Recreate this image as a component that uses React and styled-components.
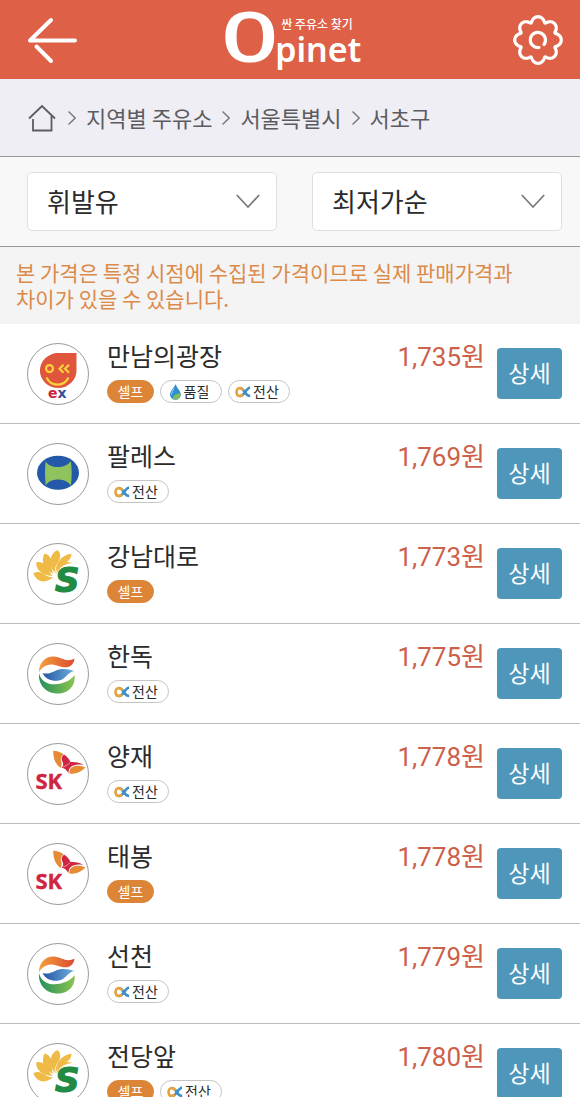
import React, { useState } from 'react';
import styled, { createGlobalStyle } from 'styled-components';

const GlobalStyle = createGlobalStyle`
  * { box-sizing: border-box; }
  html { scrollbar-width: none; }
  body {
    margin: 0;
    background: #fff;
    color: #2b2b2b;
    font-family: "Noto Sans CJK KR", sans-serif;
  }
  button, select { font-family: inherit; }
`;

const Header = styled.header`
  display: flex;
  align-items: center;
  justify-content: space-between;
  height: 79px;
  padding: 0 17px 0 27px;
  background: #de6046;
`;
const IconButton = styled.button`
  display: flex;
  padding: 0;
  border: 0;
  background: none;
  color: #fff;
  cursor: pointer;
`;
const Brand = styled.a`
  display: flex;
  align-self: flex-start;
  align-items: flex-start;
  margin-right: 4px;
  color: #fff;
  text-decoration: none;
`;
const BrandInitial = styled.span`
  font: 400 70px/74px "Liberation Serif", serif;
  -webkit-text-stroke: 4px #fff;
`;
const BrandRest = styled.span`
  display: flex;
  flex-direction: column;
  padding-top: 16px;
`;
const BrandTagline = styled.span`
  padding-left: 6px;
  font-size: 12px;
  font-weight: 500;
  line-height: 16px;
`;
const BrandName = styled.span`
  font: 600 34px/34px "Noto Sans", sans-serif;
`;

const Breadcrumb = styled.nav`
  display: flex;
  align-items: center;
  gap: 10px;
  height: 78px;
  padding: 0 28px;
  background: #efeef4;
  border-bottom: 1px solid #98989b;
`;
const Crumb = styled.a`
  display: flex;
  padding-bottom: 2px;
  color: #5c5c60;
  font-size: 22px;
  line-height: 32px;
  text-decoration: none;
  white-space: nowrap;
`;

const FilterBar = styled.div`
  display: grid;
  grid-template-columns: 1fr 1fr;
  gap: 35px;
  padding: 15px 18px 15px 27px;
  background: #f8f8f8;
  border-bottom: 1px solid #98989b;
`;
const SelectBox = styled.div`
  position: relative;
  svg {
    position: absolute;
    right: 17px;
    top: 22px;
    pointer-events: none;
  }
`;
const Select = styled.select`
  display: block;
  width: 100%;
  height: 59px;
  padding: 0 50px 2px 19px;
  border: 1px solid #dfdfdf;
  border-radius: 5px;
  background: #fff;
  color: #2b2b2b;
  font-size: 26px;
  appearance: none;
`;

const Notice = styled.p`
  margin: 0;
  padding: 12px 16px 13px;
  background: #f4f4f4;
  color: #dc8a4a;
  font-size: 21px;
  line-height: 26px;
  word-break: keep-all;
`;

const StationList = styled.ul`
  margin: 0;
  padding: 0;
  list-style: none;
`;
const StationRow = styled.li`
  display: flex;
  align-items: center;
  height: 100px;
  padding: 0 18px 0 27px;
  border-bottom: 1px solid #bdbdbd;
`;
const BrandMark = styled.svg`
  flex: none;
  width: 62px;
  height: 62px;
  border: 1px solid #9a9a9a;
  border-radius: 50%;
`;
const StationInfo = styled.div`
  flex: 1;
  align-self: flex-start;
  padding: 14px 0 0 18px;
`;
const StationName = styled.h2`
  margin: 0;
  font-size: 25px;
  font-weight: 400;
  line-height: 34px;
`;
const Badges = styled.div`
  display: flex;
  gap: 6px;
  margin-top: 8px;
`;
const Badge = styled.span`
  display: flex;
  align-items: center;
  justify-content: center;
  gap: 2px;
  width: ${props => props.$self ? "47px" : "62px"};
  height: 23px;
  padding-right: ${props => props.$self ? "0" : "4px"};
  border: 1px solid ${props => props.$self ? "#dc8537" : "#c4c4c4"};
  border-radius: 12px;
  background: ${props => props.$self ? "#dc8537" : "#fff"};
  color: ${props => props.$self ? "#fff" : "#2b2b2b"};
  font-size: 14px;
  line-height: 20px;
`;
const BadgeText = styled.span`
  padding-bottom: 2px;
`;
const Price = styled.span`
  align-self: flex-start;
  padding-top: 16px;
  color: #cd6049;
  font-family: Roboto, "Noto Sans CJK KR", sans-serif;
  font-size: 26px;
  line-height: 34px;
`;
const DetailButton = styled.button`
  width: 65px;
  height: 51px;
  margin-left: 12px;
  padding: 0 0 4px;
  border: 0;
  border-radius: 4px;
  background: #4f97ba;
  color: #fff;
  font-size: 23px;
  cursor: pointer;
`;

// eight rounded teeth around the centre
const gearPath = Array.from({ length: 160 }, (_, i) => {
  const a = (i / 160) * Math.PI * 2;
  const r = 20.8 + 2.5 * Math.cos(8 * a);
  const t = a + 0.07 * Math.sin(8 * a);
  return `${i ? "L" : "M"}${(25 + r * Math.cos(t)).toFixed(2)} ${(25 + r * Math.sin(t)).toFixed(2)}`;
}).join("") + "Z";

const BackIcon = () => (
  <svg width="50" height="50" viewBox="0 0 50 50" fill="none" stroke="currentColor" strokeWidth="4" strokeLinecap="round" strokeLinejoin="round">
    <path d="M24 5 3 25.500H48M9.500 31.500 24 46" />
  </svg>
);

const GearIcon = () => (
  <svg width="50" height="50" viewBox="0 0 50 50" fill="none" stroke="currentColor" strokeWidth="3.200" strokeLinecap="round" strokeLinejoin="round">
    <path d={gearPath} />
    <path d="M26 32.500A7.600 7.600 0 1 1 31 29.500" />
  </svg>
);

const HomeIcon = () => (
  <svg width="30" height="32" viewBox="0 0 30 32" fill="none" stroke="currentColor" strokeWidth="1.800">
    <path d="M1 17.500 14 5 27 17.500M5 18V29.500H23.500V14" />
  </svg>
);

const CrumbArrow = () => (
  <svg width="8" height="14" viewBox="0 0 8 14" fill="none" stroke="#77777b" strokeWidth="1.400">
    <path d="M.5.5 7.200 7 .5 13.500" />
  </svg>
);

const SelectArrow = () => (
  <svg width="24" height="15" viewBox="0 0 24 15" fill="none" stroke="#7c7c7c" strokeWidth="1.800">
    <path d="M.8 1 12 13 23.200 1" />
  </svg>
);

const DropIcon = () => (
  <svg width="13" height="16" viewBox="0 0 13 16">
    <path d="M6.500.3C5 4 1 7 1 10.500a5.400 5.200 0 0 0 10.800 0C11.800 7 8 4 6.500.3Z" fill="#2f8fcf" />
    <path d="M4 15c-.5-3.500 3-6 7.600-5.500.7 3-1.600 6.300-5.200 6.200Z" fill="#7dbb5c" />
    <path d="M5 4.500C3.500 7 2.400 8.500 2.600 10.500" stroke="#9fd4f2" strokeWidth="1" fill="none" />
  </svg>
);

const AlphaIcon = () => (
  <svg width="16" height="12" viewBox="0 0 16 12" fill="none" strokeWidth="2.600">
    <path d="M15 1.500C12.500 2 11 5 9 7.500 7.500 9.500 6 10.200 4.600 10" stroke="#3d8fc8" />
    <path d="M4.800 2C7.500 2 8.500 4 10 6.500 11.500 9 13 10 15.200 10" stroke="#3d8fc8" />
    <path d="M8.500 4.500C7.500 3 6.500 2 4.800 2 3 2 1.500 3.500 1.500 6 1.500 8.500 3 10 4.800 10 6 10 7 9.500 8 8.500" stroke="#e6a23c" />
  </svg>
);

const ExMark = () => (
  <>
    <defs>
      <linearGradient id="exText">
        <stop offset=".55" stopColor="#c8233f" />
        <stop offset=".7" stopColor="#2b4fa2" />
      </linearGradient>
    </defs>
    <path d="M31 10H49.500V27.500A18.300 17.500 0 1 1 31 10Z" fill="#e0563c" />
    <g fill="none" stroke="#fbd23c" strokeWidth="2.200">
      <circle cx="22.500" cy="25.600" r="3.500" />
      <path d="M36.500 21.800 32.500 25.800 36.500 29.800M42 21.800 38 25.800 42 29.800" />
      <path d="M19.500 34.500C24 44 37 44 41.500 34.500" />
    </g>
    <text x="21" y="54.500" fontFamily="DejaVu Sans" fontWeight="700" fontSize="14" fill="url(#exText)">ex</text>
  </>
);

const HyundaiMark = () => (
  <>
    <ellipse cx="31" cy="29.800" rx="21" ry="17" fill="#2459a9" />
    <path d="M18.700 18.300C22 26 39 26 43.800 18.300 45 26 45 34 43.800 42.500 39 34.500 23 34.500 18.700 42.500 17.800 34 17.800 26 18.700 18.300Z" fill="#8fc35d" />
  </>
);

const SoilMark = () => (
  <>
    <g fill="#efba45">
      <path d="M28.500 31C28 22 33 12 44.500 10.800 44.500 16 41 18.500 37 20.500 32.500 23 29.500 26 28.500 31Z" />
      <path d="M27.500 30C21.500 21 22 11 30.500 7 34 10 34 15 31.500 18.500 28.500 22.500 27.500 26 27.500 30Z" />
      <path d="M26 31C17 26 13.500 19 17.500 10.500 22 11.500 24.500 15 24.500 19.500 24.500 24 25 28 26 31Z" />
      <path d="M25.500 33C15 32 8.500 27 9.300 19.300 14.500 18.300 18 20.500 20.500 25 22 28 23.500 31 25.500 33Z" />
      <path d="M26 34C19 41 10 39.500 6.300 30.500 11 27.500 15 29.500 18.500 32 21 33.800 23 34.500 26 34Z" />
      <path d="M29.500 31C30 23 37 16.500 45.500 20 41 20.500 35 22 32 26.500Z" />
    </g>
    <text x="28" y="49" fontFamily="DejaVu Sans" fontWeight="700" fontStyle="italic" fontSize="34" fill="#218a43" stroke="#218a43" strokeWidth="1.200">S</text>
  </>
);

const GsMark = () => (
  <>
    <defs>
      <linearGradient id="gsOrange">
        <stop stopColor="#f3a13b" />
        <stop offset="1" stopColor="#dc4a30" />
      </linearGradient>
      <linearGradient id="gsBlue">
        <stop stopColor="#2455a4" />
        <stop offset="1" stopColor="#6fb0dc" />
      </linearGradient>
      <linearGradient id="gsGreen">
        <stop stopColor="#22905a" />
        <stop offset="1" stopColor="#8cc350" />
      </linearGradient>
    </defs>
    <path d="M12 29C12 19 19 13 27 13.500 34 14 40 20 47.500 15.500 47 21 43 24.500 38 24.300 31 24 27 20 20.500 22 16.500 23.300 14 26 12 29Z" fill="url(#gsOrange)" />
    <path d="M15.500 30C20 31.500 24 30 28 28 34 25 41 26 47.300 28 42 29 40 33 36 36 30 39.500 19 38 15.500 30Z" fill="url(#gsBlue)" />
    <path d="M12 30C14 40 24 43 34 40.500 40 39 45 36 47.500 32 49 43 41 50.500 31 50.500 19 50.500 11 42 12 30Z" fill="url(#gsGreen)" />
  </>
);

const SkMark = () => (
  <>
    <path d="M26.300 7.800C30 8 33.500 9 36.500 11.200 33.800 13.500 33 16.500 34.800 20L34 25C28.500 22 26 15 26.300 7.800Z" fill="#e58a35" />
    <path d="M42.500 30.500C42 26.500 44 24.300 47 23.200 51 22.300 55 22.800 58.500 24.500 54 29 49 31.500 42.500 30.500Z" fill="#e58a35" />
    <path d="M37 11.500C40 13 42 16 43.500 19 48 18.500 53 19.500 56.500 22 51 21 46.500 21.500 43.500 24.300 42 26 41.500 28 41.500 30 39.500 27 37.500 25 34.800 24.800 36.300 22.500 36.500 21 35.700 19.300 33.900 16.300 34.500 13.700 37 11.500Z" fill="#cf2542" />
    <path d="M36 24C38.500 23.500 41 21.500 43 19.700" stroke="#fff" strokeWidth=".5" fill="none" />
    <text x="8.500" y="46" fontFamily="Noto Sans" fontWeight="700" fontSize="22" fill="#cf2542" stroke="#cf2542" strokeWidth=".4">SK</text>
  </>
);

const marks = { ex: ExMark, hyundai: HyundaiMark, soil: SoilMark, gs: GsMark, sk: SkMark };

const stations = [
  { name: "만남의광장", price: "1,735", mark: "ex", badges: ["셀프", "품질", "전산"] },
  { name: "팔레스", price: "1,769", mark: "hyundai", badges: ["전산"] },
  { name: "강남대로", price: "1,773", mark: "soil", badges: ["셀프"] },
  { name: "한독", price: "1,775", mark: "gs", badges: ["전산"] },
  { name: "양재", price: "1,778", mark: "sk", badges: ["전산"] },
  { name: "태봉", price: "1,778", mark: "sk", badges: ["셀프"] },
  { name: "선천", price: "1,779", mark: "gs", badges: ["전산"] },
  { name: "전당앞", price: "1,780", mark: "soil", badges: ["셀프", "전산"] },
];

const Station = ({ station }) => {
  const Mark = marks[station.mark];
  return (
    <StationRow>
      <BrandMark viewBox="1 1 60 60" aria-hidden="true"><Mark /></BrandMark>
      <StationInfo>
        <StationName>{station.name}</StationName>
        <Badges>
          {station.badges.map(b => (
            <Badge key={b} $self={b === "셀프"}>
              {b === "품질" && <DropIcon />}
              {b === "전산" && <AlphaIcon />}
              <BadgeText>{b}</BadgeText>
            </Badge>
          ))}
        </Badges>
      </StationInfo>
      <Price>{station.price}원</Price>
      <DetailButton type="button">상세</DetailButton>
    </StationRow>
  );
};

const App = () => {
  const [fuel, setFuel] = useState("휘발유");
  const [sort, setSort] = useState("최저가순");

  return (
    <>
      <GlobalStyle />
      <Header>
        <IconButton type="button" aria-label="뒤로"><BackIcon /></IconButton>
        <Brand href="#">
          <BrandInitial>O</BrandInitial>
          <BrandRest>
            <BrandTagline>싼 주유소 찾기</BrandTagline>
            <BrandName>pinet</BrandName>
          </BrandRest>
        </Brand>
        <IconButton type="button" aria-label="설정"><GearIcon /></IconButton>
      </Header>
      <Breadcrumb>
        <Crumb href="#" aria-label="홈"><HomeIcon /></Crumb>
        <CrumbArrow />
        <Crumb href="#">지역별 주유소</Crumb>
        <CrumbArrow />
        <Crumb href="#">서울특별시</Crumb>
        <CrumbArrow />
        <Crumb href="#">서초구</Crumb>
      </Breadcrumb>
      <FilterBar>
        <SelectBox>
          <Select aria-label="유종" value={fuel} onChange={(e) => setFuel(e.target.value)}>
            <option>휘발유</option>
            <option>경유</option>
          </Select>
          <SelectArrow />
        </SelectBox>
        <SelectBox>
          <Select aria-label="정렬" value={sort} onChange={(e) => setSort(e.target.value)}>
            <option>최저가순</option>
            <option>거리순</option>
          </Select>
          <SelectArrow />
        </SelectBox>
      </FilterBar>
      <Notice>본 가격은 특정 시점에 수집된 가격이므로 실제 판매가격과 차이가 있을 수 있습니다.</Notice>
      <StationList>
        {stations.map((s, i) => <Station key={i} station={s} />)}
      </StationList>
    </>
  );
};

export default App;
